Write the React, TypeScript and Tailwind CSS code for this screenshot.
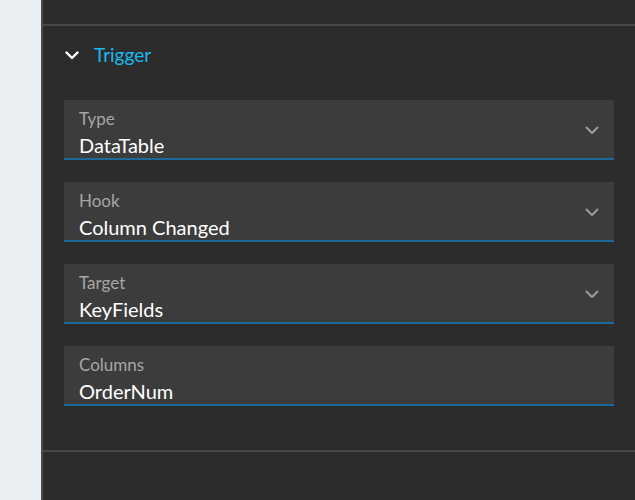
const fields = [
	{ label: 'Type', value: 'DataTable', select: true },
	{ label: 'Hook', value: 'Column Changed', select: true },
	{ label: 'Target', value: 'KeyFields', select: true },
	{ label: 'Columns', value: 'OrderNum', select: false },
];

function Chevron({ className, width = 2.4 }: { className: string; width?: number }) {
	return (
		<svg className={className} fill="none" viewBox="0 0 14 9">
			<path
				d="M1.5 1.5 L7 7 L12.5 1.5"
				stroke="currentColor"
				strokeLinecap="round"
				strokeLinejoin="round"
				strokeWidth={width}
			/>
		</svg>
	);
}

function Field({ label, value, select }: { label: string; value: string; select: boolean }) {
	return (
		<div
			className="flex h-[60px] items-start justify-between border-b-2
				border-[#1c6a9c] bg-[#3c3c3c] pt-[8px] pr-[15px] pl-[15px]"
		>
			<div className="flex flex-col">
				<span className="text-[17px] leading-[21px] text-[#a6a6a6]">{label}</span>
				<span className="mt-[3px] text-[20px] leading-[26px] text-white">{value}</span>
			</div>
			{select && <Chevron className="mt-[18px] h-[9px] w-[14px] text-[#9a9a9a]" width={2} />}
		</div>
	);
}

export default function App() {
	return (
		<div
			className="flex h-[500px] w-[635px] overflow-hidden bg-[#e9eef2]"
			style={{ fontFamily: 'Lato, "Open Sans", sans-serif' }}
		>
			<div className="w-[41px] shrink-0" />
			<div className="flex flex-1 flex-col border-l-2 border-[#4a4a4a] bg-[#2c2c2c]">
				<div className="h-[26px] border-b-2 border-[#474747]" />
				<div className="flex flex-col pr-[21px] pl-[21px]">
					<div className="flex h-[58px] items-center gap-[15px] pl-[1px]">
						<Chevron className="h-[9px] w-[14px] text-white" />
						<span className="text-[19px] text-[#1ab8ee]">Trigger</span>
					</div>
					<div className="mt-[16px] flex flex-col gap-[22px]">
						{fields.map((f) => (
							<Field key={f.label} {...f} />
						))}
					</div>
				</div>
				<div className="mt-[44px] border-b-2 border-[#474747]" />
			</div>
		</div>
	);
}
